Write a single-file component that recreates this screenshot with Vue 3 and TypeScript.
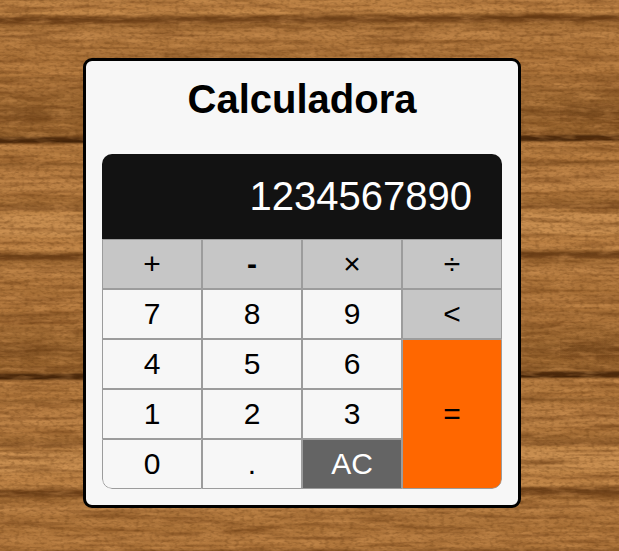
<script setup lang="ts">
import { ref } from 'vue'

interface Key {
  label: string
  kind: 'number' | 'operator' | 'clear' | 'equals'
}

const display = ref('1234567890')

const keys: Key[] = [
  { label: '+', kind: 'operator' },
  { label: '-', kind: 'operator' },
  { label: '×', kind: 'operator' },
  { label: '÷', kind: 'operator' },
  { label: '7', kind: 'number' },
  { label: '8', kind: 'number' },
  { label: '9', kind: 'number' },
  { label: '<', kind: 'operator' },
  { label: '4', kind: 'number' },
  { label: '5', kind: 'number' },
  { label: '6', kind: 'number' },
  { label: '=', kind: 'equals' },
  { label: '1', kind: 'number' },
  { label: '2', kind: 'number' },
  { label: '3', kind: 'number' },
  { label: '0', kind: 'number' },
  { label: '.', kind: 'number' },
  { label: 'AC', kind: 'clear' },
]

function evaluate(source: string): string {
  const tokens = source.match(/\d*\.?\d+|[+\-×÷]/g) ?? []
  const terms: number[] = []
  let operator = '+'
  for (const token of tokens) {
    if (/^[+\-×÷]$/.test(token)) {
      operator = token
      continue
    }
    const value = Number(token)
    if (operator === '+') terms.push(value)
    else if (operator === '-') terms.push(-value)
    else if (operator === '×') terms.push((terms.pop() ?? 0) * value)
    else terms.push((terms.pop() ?? 0) / value)
  }
  return String(terms.reduce((sum, term) => sum + term, 0))
}

function press(key: Key): void {
  if (key.kind === 'clear') display.value = ''
  else if (key.kind === 'equals') display.value = evaluate(display.value)
  else if (key.label === '<') display.value = display.value.slice(0, -1)
  else display.value += key.label
}

/* Shades down one repeat of the wood, as [offset in px, colour]. */
const plankHeight = 236.5
const shades: [number, string][] = [
  [0, '#be8446'], [8, '#b87d41'], [14, '#c4894a'], [17, '#8b5827'], [19, '#6f4219'],
  [23, '#7d4c20'], [25, '#9c6731'], [31, '#aa7239'], [36, '#bb8145'], [43, '#ad743a'],
  [50, '#ae753b'], [57, '#a66e35'], [65, '#b47a3f'], [75, '#b0763b'], [78, '#99642f'],
  [86, '#ae753b'], [92, '#9c6731'], [104, '#9e6932'], [114, '#905e2b'], [126, '#98632d'],
  [136, '#905e2b'], [138, '#4d2a0c'], [142, '#432308'], [144, '#a06a34'], [146, '#bf8447'],
  [150, '#a87037'], [155, '#b67c40'], [161, '#b0763b'], [164, '#925f2c'], [169, '#b57b40'],
  [180, '#b87e43'], [189, '#bc8246'], [195, '#ad743a'], [203, '#9c6731'], [209, '#915e2d'],
  [212, '#be8446'], [217, '#c78d4f'], [234, '#c78d4f'], [236.5, '#be8446'],
]
</script>

<template>
  <main class="page">
    <svg class="wood" aria-hidden="true">
      <defs>
        <linearGradient id="shade" x1="0" y1="0" x2="0" y2="1">
          <stop
            v-for="([y, color], i) in shades"
            :key="i"
            :offset="y / plankHeight"
            :stop-color="color"
          />
        </linearGradient>
        <radialGradient id="smudge">
          <stop offset="0" stop-color="#5f3510" stop-opacity="0.35" />
          <stop offset="1" stop-color="#5f3510" stop-opacity="0" />
        </radialGradient>
        <pattern id="plank" width="560" height="236.5" patternUnits="userSpaceOnUse">
          <rect width="560" height="237" fill="url(#shade)" />
          <ellipse cx="20" cy="115" rx="50" ry="15" fill="url(#smudge)" />
          <ellipse cx="45" cy="21" rx="100" ry="4" fill="url(#smudge)" />
          <ellipse cx="520" cy="19" rx="120" ry="4" fill="url(#smudge)" />
        </pattern>
        <filter id="grain" x="0" y="0" width="100%" height="100%" color-interpolation-filters="sRGB">
          <feTurbulence type="fractalNoise" baseFrequency="0.014 0.2" numOctaves="2" seed="7" />
          <feColorMatrix values="0 0 0 0 0.38  0 0 0 0 0.2  0 0 0 0 0.05  1.3 0 0 0 -0.58" />
        </filter>
        <filter id="pores" x="0" y="0" width="100%" height="100%" color-interpolation-filters="sRGB">
          <feTurbulence type="fractalNoise" baseFrequency="0.2 0.4" numOctaves="2" seed="23" />
          <feColorMatrix values="0 0 0 0 0.36  0 0 0 0 0.2  0 0 0 0 0.05  0.8 0 0 0 -0.35" />
        </filter>
        <filter id="glints" x="0" y="0" width="100%" height="100%" color-interpolation-filters="sRGB">
          <feTurbulence type="fractalNoise" baseFrequency="0.04 0.25" numOctaves="3" seed="41" />
          <feColorMatrix values="0 0 0 0 0.82  0 0 0 0 0.58  0 0 0 0 0.33  1.1 0 0 0 -0.48" />
        </filter>
      </defs>
      <g transform="skewY(-0.22)">
        <rect y="-10" width="100%" height="110%" fill="url(#plank)" />
        <ellipse cx="619" cy="115" rx="70" ry="18" fill="url(#smudge)" />
        <ellipse cx="619" cy="351" rx="70" ry="18" fill="url(#smudge)" />
      </g>
      <rect width="100%" height="100%" filter="url(#grain)" />
      <rect width="100%" height="100%" filter="url(#glints)" />
      <rect width="100%" height="100%" filter="url(#pores)" />
    </svg>

    <section class="calculator">
      <h1 class="title">Calculadora</h1>
      <div class="body">
        <output class="display">{{ display }}</output>
        <div class="keys">
          <button
            v-for="key in keys"
            :key="key.label"
            type="button"
            class="key"
            :class="[key.kind, { minus: key.label === '-' }]"
            @click="press(key)"
          >
            {{ key.label }}
          </button>
        </div>
      </div>
    </section>
  </main>
</template>

<style>
body {
  background: #ad743a;
}
</style>

<style scoped>
.page {
  box-sizing: border-box;
  display: flex;
  justify-content: center;
  align-items: flex-start;
  min-height: 100vh;
  padding: 58px 15px 43px 0;
  font-family: Arial, 'Liberation Sans', sans-serif;
  color: #000;
}

.wood {
  position: fixed;
  inset: 0;
  z-index: -1;
  width: 100%;
  height: 100%;
}

.calculator {
  box-sizing: border-box;
  width: 438px;
  padding: 16px;
  background: #f7f7f7;
  border: 3px solid #000;
  border-radius: 9px;
}

.title {
  margin: 0 0 33px;
  font-size: 40px;
  line-height: 44px;
  text-align: center;
}

.body {
  overflow: hidden;
  border-radius: 10px;
}

.display {
  box-sizing: border-box;
  display: block;
  height: 85px;
  padding: 0 30px;
  background: #121212;
  color: #fff;
  font-size: 40px;
  line-height: 84px;
  text-align: right;
}

.keys {
  display: grid;
  grid-template-columns: repeat(4, 100px);
  grid-auto-rows: 50px;
}

.key {
  margin: 0;
  padding: 0;
  border: 1px solid #9c9c9c;
  background: #f7f7f7;
  color: #000;
  font: 30px Arial, 'Liberation Sans', sans-serif;
}

.operator {
  background: #c6c6c6;
}

.minus {
  font-weight: bold;
}

.clear {
  background: #646464;
  color: #fff;
}

.equals {
  grid-column: 4;
  grid-row: 3 / span 3;
  background: #ff6700;
  border-bottom-right-radius: 10px;
}

.key:nth-child(16) {
  border-bottom-left-radius: 10px;
}
</style>
